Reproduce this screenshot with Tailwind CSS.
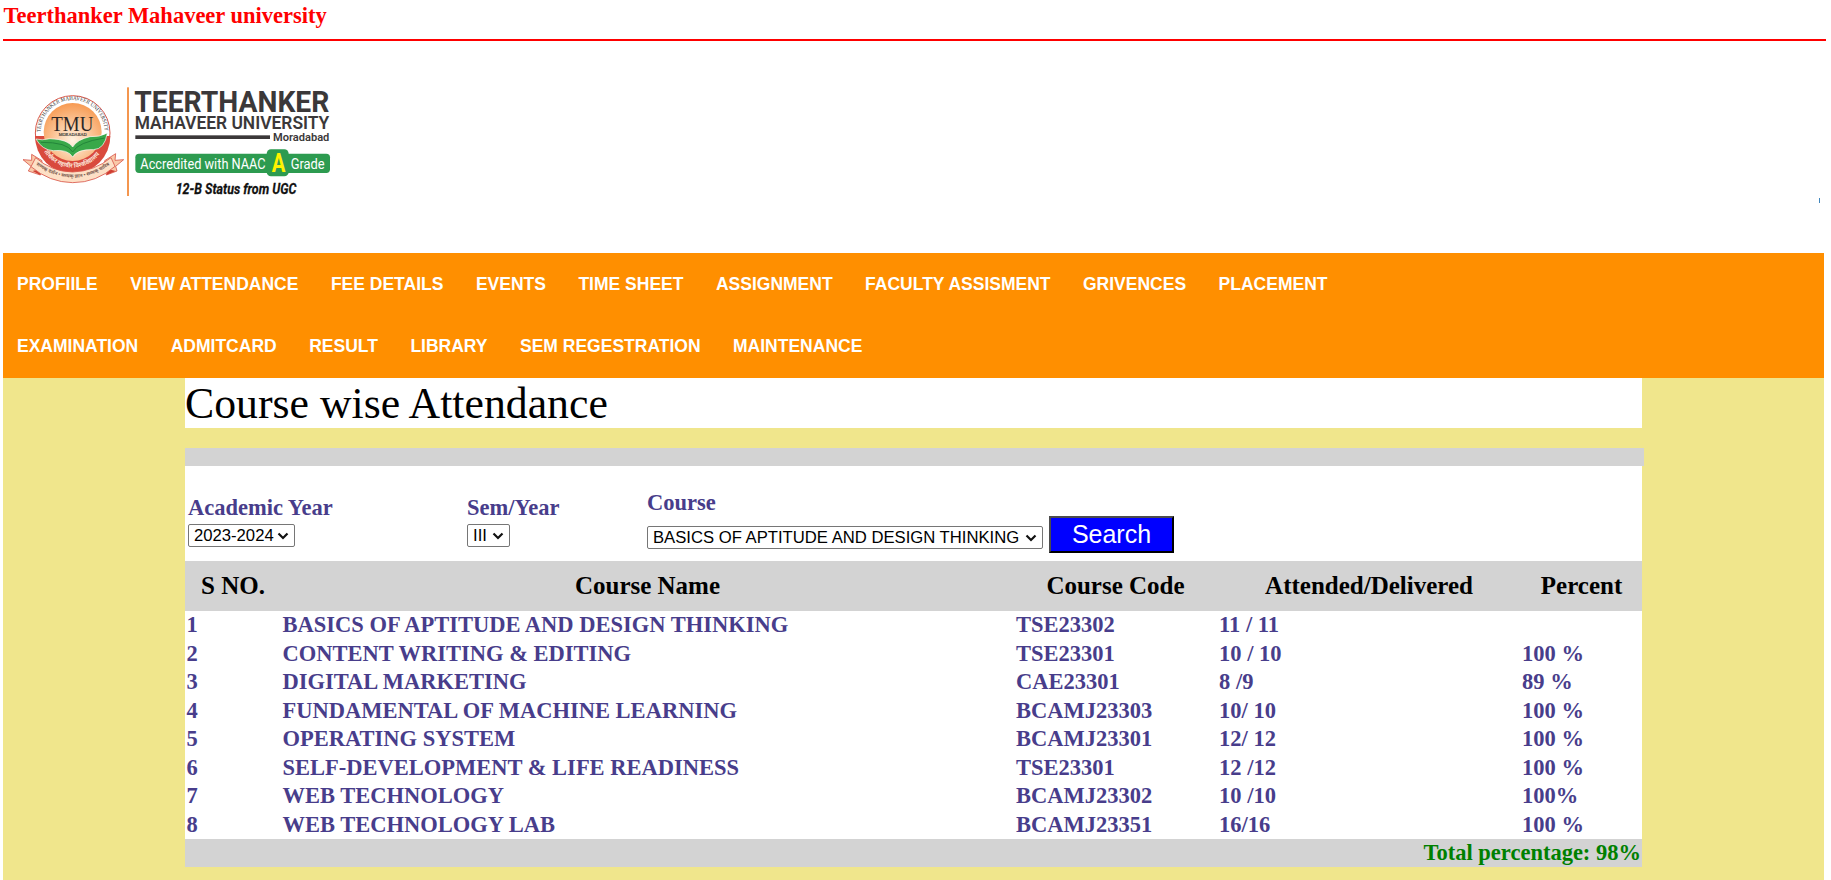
<!DOCTYPE html>
<html lang="en">
<head>
<meta charset="utf-8">
<title>Teerthanker Mahaveer university</title>
<script src="https://cdn.jsdelivr.net/npm/@tailwindcss/browser@4"></script>
</head>
<body class="h-[880px] overflow-hidden bg-white pl-[3px] font-['Liberation_Serif',serif] text-black">
<h1 class="h-[39px] pt-[3px] pl-[0.5px] text-[22.5px] leading-[26px] font-bold text-[#ff0000]">Teerthanker Mahaveer university</h1>
<div class="h-[2px] w-[1823px] bg-[#ff0000]"></div>

<header class="flex h-[212px] w-[1823px] justify-between">
  <svg width="360" height="212" viewBox="9 123 1080 636" class="shrink-0">
    <defs>
      <radialGradient id="sun" cx="50%" cy="65%" r="65%"><stop offset="0" stop-color="#fff3e2"/><stop offset="1" stop-color="#f79a52"/></radialGradient>
      <path id="topArc" d="M122 396 A96 96 0 0 1 314 396"/>
      <path id="redArc" d="M132 455 A101 101 0 0 0 304 455"/>
      <path id="ribArc" d="M108 494 Q218 572 330 494"/>
    </defs>
    <circle cx="218" cy="399" r="112" fill="#fff" stroke="#d9574a" stroke-width="3"/>
    <path d="M105 408 A113 113 0 0 0 331 408 Z" fill="#d94a3d"/>
    <circle cx="218" cy="396" r="87" fill="url(#sun)"/>
    <text font-family="Liberation Serif,serif" font-size="17" fill="#333"><textPath href="#topArc" textLength="298" lengthAdjust="spacingAndGlyphs">TEERTHANKER MAHAVEER UNIVERSITY</textPath></text>
    <text x="154" y="393" font-family="Liberation Serif,serif" font-size="64" fill="#2d2725" textLength="126" lengthAdjust="spacingAndGlyphs">TMU</text>
    <text x="176" y="408" font-family="Liberation Serif,serif" font-size="15" fill="#333" stroke="#333" stroke-width=".5" textLength="84" lengthAdjust="spacingAndGlyphs">MORADABAD</text>
    <path d="M108 417 Q124 422 150 416 Q204 418 218 441 Q232 418 270 410 Q298 412 322 399 Q314 448 280 449 Q232 447 218 471 Q204 447 160 452 Q126 450 108 417Z" fill="#39a849" stroke="#fff" stroke-width="2"/>
    <path d="M122 427 Q202 426 218 456 Q234 426 314 414" fill="none" stroke="#23853a" stroke-width="3"/>
    <text font-family="Noto Sans,sans-serif" font-size="19" font-weight="700" fill="#fbe3d8"><textPath href="#redArc" textLength="196" lengthAdjust="spacingAndGlyphs">तीर्थंकर महावीर विश्वविद्यालय</textPath></text>
    <path d="M69 479 L95 481 L95 463 L126 482 L121 525 L85 513 L93 499Z" fill="#f9c9a8" stroke="#d9574a" stroke-width="2.5"/>
    <path d="M371 479 L345 481 L347 461 L314 482 L319 525 L351 513 L347 499Z" fill="#f9c9a8" stroke="#d9574a" stroke-width="2.5"/>
    <path d="M98 513 L121 525 L119 507Z M319 525 L347 513 L324 507Z" fill="#cf3c30"/>
    <path d="M107 473 Q155 515 218 516 Q282 514 333 473 L345 499 Q290 548 218 548 Q148 547 93 500Z" fill="#fde0c6" stroke="#d9574a" stroke-width="2.5"/>
    <text font-family="Noto Sans,sans-serif" font-size="14" font-weight="700" fill="#7a5a50"><textPath href="#ribArc" textLength="238" lengthAdjust="spacingAndGlyphs">सम्यक् दर्शन • सम्यक् ज्ञान • सम्यक् चारित्र</textPath></text>

    <rect x="381" y="262" width="6" height="326" fill="#f4964f"/>
    <g font-family="Roboto,sans-serif" fill="#3b3839">
      <text x="403" y="336" font-size="86" font-weight="700" textLength="585" lengthAdjust="spacingAndGlyphs">TEERTHANKER</text>
      <text x="404" y="386" font-size="54" font-weight="600" textLength="584" lengthAdjust="spacingAndGlyphs">MAHAVEER UNIVERSITY</text>
      <rect x="406" y="406" width="404" height="11"/>
      <text x="819" y="422" font-size="33" font-weight="600" textLength="169" lengthAdjust="spacingAndGlyphs">Moradabad</text>
    </g>
    <rect x="406" y="461" width="584" height="58" rx="11" fill="#2d9b50"/>
    <rect x="800" y="448" width="66" height="81" rx="13" fill="#2d9b50"/>
    <g font-family="Roboto,sans-serif">
      <text x="421" y="507" font-size="46" fill="#fff" textLength="376" lengthAdjust="spacingAndGlyphs">Accredited with NAAC</text>
      <text x="815" y="515" font-size="75" font-weight="700" fill="#fff200" textLength="41" lengthAdjust="spacingAndGlyphs">A</text>
      <text x="872" y="507" font-size="46" fill="#fff" textLength="102" lengthAdjust="spacingAndGlyphs">Grade</text>
      <text x="527" y="581" font-size="44" font-weight="700" font-style="italic" fill="#111" stroke="#111" stroke-width=".8" textLength="362" lengthAdjust="spacingAndGlyphs">12-B Status from UGC</text>
    </g>
  </svg>
  <div class="mt-[157px] mr-[6px] h-[5px] w-px bg-[#3f86bd]"></div>
</header>

<nav class="flex h-[125px] w-[1821px] flex-col bg-[#ff8f00] pl-[14px] font-['Liberation_Sans',sans-serif] text-[17.5px] font-bold text-white">
  <div class="flex h-[62px] items-center gap-[32.5px] whitespace-nowrap">
    <a>PROFIILE</a><a>VIEW ATTENDANCE</a><a>FEE DETAILS</a><a>EVENTS</a><a>TIME SHEET</a><a>ASSIGNMENT</a><a>FACULTY ASSISMENT</a><a>GRIVENCES</a><a>PLACEMENT</a>
  </div>
  <div class="flex h-[62px] items-center gap-[32.5px] whitespace-nowrap">
    <a>EXAMINATION</a><a>ADMITCARD</a><a>RESULT</a><a>LIBRARY</a><a>SEM REGESTRATION</a><a>MAINTENANCE</a>
  </div>
</nav>

<main class="h-[502px] w-[1821px] bg-[#f0e68c] pl-[182px]">
  <h2 class="h-[50px] w-[1457px] bg-white text-[43.75px] leading-[51px]">Course wise Attendance</h2>
  <div class="mt-[20px] h-[18px] w-[1459px] bg-[#d3d3d3]"></div>
  <form class="flex h-[95px] w-[1457px] bg-white pl-[3px] text-[22.5px] font-bold text-[#483d8b]">
    <div class="w-[279px] pt-[29px]">
      <div class="h-[29px] leading-[26px]">Academic Year</div>
      <div class="flex h-[23px] w-[107px] items-center justify-between rounded-[2px] border border-[#767676] pr-[5px] pl-[5px] font-['Liberation_Sans',sans-serif] text-[16.67px] font-normal whitespace-nowrap text-black"><span>2023-2024</span><svg width="12" height="8" viewBox="0 0 12 8"><path d="M1.5 1.5L6 6L10.5 1.5" fill="none" stroke="#111" stroke-width="2.2"/></svg></div>
    </div>
    <div class="w-[180px] pt-[29px]">
      <div class="h-[29px] leading-[26px]">Sem/Year</div>
      <div class="flex h-[23px] w-[43px] items-center justify-between rounded-[2px] border border-[#767676] pr-[5px] pl-[5px] font-['Liberation_Sans',sans-serif] text-[16.67px] font-normal whitespace-nowrap text-black"><span>III</span><svg width="12" height="8" viewBox="0 0 12 8"><path d="M1.5 1.5L6 6L10.5 1.5" fill="none" stroke="#111" stroke-width="2.2"/></svg></div>
    </div>
    <div class="w-[402px] pt-[24px]">
      <div class="h-[36px] leading-[26px]">Course</div>
      <div class="flex h-[23px] w-[396px] items-center justify-between rounded-[2px] border border-[#767676] pr-[5px] pl-[5px] font-['Liberation_Sans',sans-serif] text-[16.67px] font-normal whitespace-nowrap text-black"><span>BASICS OF APTITUDE AND DESIGN THINKING</span><svg width="12" height="8" viewBox="0 0 12 8"><path d="M1.5 1.5L6 6L10.5 1.5" fill="none" stroke="#111" stroke-width="2.2"/></svg></div>
    </div>
    <button type="button" class="mt-[50px] h-[37px] w-[125px] border-2 border-t-[#4c4c4c] border-r-black border-b-black border-l-[#4c4c4c] bg-[#0000ff] pb-[1px] font-['Liberation_Sans',sans-serif] text-[25px] leading-[32px] font-normal text-white">Search</button>
  </form>

  <div class="grid h-[50px] w-[1457px] grid-cols-[96px_733px_203px_304px_121px] bg-[#d3d3d3] text-center text-[25px] leading-[50px] font-bold">
    <div>S NO.</div><div>Course Name</div><div>Course Code</div><div>Attended/Delivered</div><div>Percent</div>
  </div>
  <div class="grid h-[228px] w-[1457px] auto-rows-[28.5px] grid-cols-[96px_733.5px_203px_303px_120px] bg-white pl-[1.5px] text-[22.5px] leading-[28px] font-bold whitespace-nowrap text-[#483d8b]">
    <div>1</div><div>BASICS OF APTITUDE AND DESIGN THINKING</div><div>TSE23302</div><div>11 / 11</div><div></div>
    <div>2</div><div>CONTENT WRITING &amp; EDITING</div><div>TSE23301</div><div>10 / 10</div><div>100 %</div>
    <div>3</div><div>DIGITAL MARKETING</div><div>CAE23301</div><div>8 /9</div><div>89 %</div>
    <div>4</div><div>FUNDAMENTAL OF MACHINE LEARNING</div><div>BCAMJ23303</div><div>10/ 10</div><div>100 %</div>
    <div>5</div><div>OPERATING SYSTEM</div><div>BCAMJ23301</div><div>12/ 12</div><div>100 %</div>
    <div>6</div><div>SELF-DEVELOPMENT &amp; LIFE READINESS</div><div>TSE23301</div><div>12 /12</div><div>100 %</div>
    <div>7</div><div>WEB TECHNOLOGY</div><div>BCAMJ23302</div><div>10 /10</div><div>100%</div>
    <div>8</div><div>WEB TECHNOLOGY LAB</div><div>BCAMJ23351</div><div>16/16</div><div>100 %</div>
  </div>
  <div class="h-[28px] w-[1457px] bg-[#d3d3d3] pr-px text-right text-[22.5px] leading-[28px] font-bold text-[#008000]">Total percentage: 98%</div>
</main>
</body>
</html>
